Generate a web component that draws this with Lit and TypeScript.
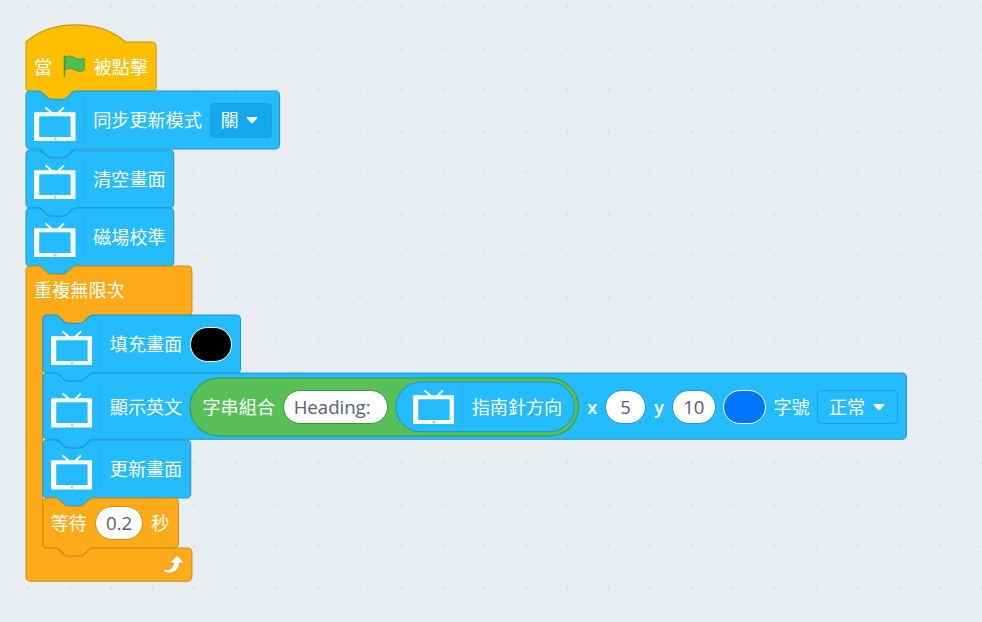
import { LitElement, html, svg, css, TemplateResult } from "lit";
import { customElement, property } from "lit/decorators.js";

const S = 1.0368;

type Shape = "hat" | "stack" | "loop" | "round";

const NOTCH = "c2,0 3,1 4,2 l4,4 c1,1 2,2 4,2 h12 c2,0 3,-1 4,-2 l4,-4 c1,-1 2,-2 4,-2";
const TAB = "c-2,0 -3,1 -4,2 l-4,4 c-1,1 -2,2 -4,2 h-12 c-2,0 -3,-1 -4,-2 l-4,-4 c-1,-1 -2,-2 -4,-2";
const CORNER = "a4,4 0 0,1 4,4";

function outline(shape: Shape, w: number, h: number, inner: number): string {
  const bottom = `V${h - 4} a4,4 0 0,1 -4,4`;
  switch (shape) {
    case "hat":
      return `M0,0 c25,-22 71,-22 96,0 H${w - 4} ${CORNER} ${bottom} H48 ${TAB} H4 a4,4 0 0,1 -4,-4 Z`;
    case "stack":
      return `M0,4 A4,4 0 0,1 4,0 H12 ${NOTCH} H${w - 4} ${CORNER} ${bottom} H48 ${TAB} H4 a4,4 0 0,1 -4,-4 Z`;
    case "loop":
      return (
        `M0,4 A4,4 0 0,1 4,0 H12 ${NOTCH} H${w - 4} ${CORNER} V44 a4,4 0 0,1 -4,4 ` +
        `H64 ${TAB} H20 a4,4 0 0,0 -4,4 V${44 + inner} a4,4 0 0,0 4,4 H28 ${NOTCH} ` +
        `H${w - 4} ${CORNER} ${bottom} H4 a4,4 0 0,1 -4,-4 Z`
      );
    case "round": {
      const r = h / 2;
      return `M${r},0 H${w - r} a${r},${r} 0 0,1 0,${h} H${r} a${r},${r} 0 0,1 0,${-h} Z`;
    }
  }
}

@customElement("code-block")
class CodeBlock extends LitElement {
  @property() shape: Shape = "stack";
  @property() tone = "screen";
  @property({ type: Number }) w = 100;
  @property({ type: Number }) h = 56;
  @property({ type: Number }) inner = 0;

  static styles = css`
    :host { display: block; position: relative; flex: none; }
    .shape { position: absolute; left: 0; top: 0; width: 100%; height: 100%; overflow: visible; }
    .screen { fill: #24bcff; stroke: #1c96cc; }
    .event { fill: #ffbf00; stroke: #cc9900; }
    .control { fill: #ffab19; stroke: #cf8b17; }
    .operator { fill: #59c059; stroke: #389438; }
    .body { position: relative; height: 100%; }
  `;

  render() {
    this.style.width = `${this.w * S}px`;
    this.style.height = `${this.h * S}px`;
    return html`
      <svg class="shape ${this.tone}">
        <path transform="scale(${S})" d=${outline(this.shape, this.w, this.h, this.inner)} />
      </svg>
      <div class="body"><slot></slot></div>
    `;
  }
}

@customElement("app-root")
class AppRoot extends LitElement {
  static styles = css`
    :host {
      display: block;
      width: 982px;
      height: 622px;
      overflow: hidden;
      position: relative;
      background: #e8edf1;
      font-family: "Open Sans", "Noto Sans CJK TC", sans-serif;
      font-size: 18.1px;
      line-height: 24px;
      color: #fff;
      white-space: nowrap;
    }
    .grid { position: absolute; inset: 0; width: 100%; height: 100%; }
    .script { position: absolute; left: 26px; top: 41.7px; display: flex; flex-direction: column; }
    .row { display: flex; align-items: center; height: 100%; padding-left: 8.1px; gap: 8.3px; box-sizing: border-box; }
    .row.joined { padding-left: 12px; }
    .row.sensor { padding-left: 16.5px; }
    .row.sensor .tv { margin-top: -3px; }
    .row.header { height: 49.8px; }
    .nested { display: flex; flex-direction: column; padding-left: 16.6px; }
    .footer { display: flex; align-items: center; justify-content: flex-end; height: 33.2px; padding-right: 8.3px; }
    .device { display: flex; flex: none; width: 50.8px; height: 42px; box-sizing: border-box; border-right: 1px solid #1fb0f2; }
    .tv { width: 41.5px; height: 41.5px; flex: none; margin-top: .4px; }
    .flag, .repeat { width: 24.9px; height: 24.9px; flex: none; }
    .flag { margin: 0 -1px 0 1px; }
    .label { flex: none; }
    .latin { font-weight: 600; }
    .field {
      flex: none; height: 34.2px; box-sizing: border-box; border: 1px solid #1c96cc; border-radius: 18px;
      background: #fff; color: #575e75; display: flex; align-items: center; justify-content: center;
      margin: 0 -0.5px; font-size: 18.6px;
    }
    .field.on-operator { border-color: #389438; justify-content: flex-start; padding-left: 10px; }
    .field.on-control { border-color: #cf8b17; }
    .field.swatch { border-color: #fff; }
    .black { background: #000; }
    .blue { background: #0076ff; }
    .menu {
      flex: none; height: 34.2px; box-sizing: border-box; border: 1px solid #1c9fdb; border-radius: 4.5px;
      display: flex; align-items: center; gap: 7.7px; padding-left: 10.5px; margin: 0 -0.5px;
    }
    .menu.filled { background: #14a9ee; gap: 7px; padding-left: 10px; }
    .caret { width: 12px; height: 8px; }
    .w-heading { width: 105.7px; }
    .w-five { width: 41.5px; }
    .w-ten { width: 44.2px; }
    .w-swatch { width: 42.5px; }
    .w-delay { width: 48.8px; }
    .w-sync { width: 62.5px; }
    .w-size { width: 81px; }
  `;

  private device(): TemplateResult {
    return html`<div class="device">
      <svg class="tv" viewBox="0 0 41.5 41.5">
        <path d="M11.4 7.4 L18 13 M30 7.4 L24.2 13" fill="none" stroke="#fff" stroke-width="1.9" />
        <path fill="#fff" fill-rule="evenodd"
          d="M1 12.2 H40.5 Q41.5 12.2 41.5 13.2 V40.5 Q41.5 41.5 40.5 41.5 H1 Q0 41.5 0 40.5 V13.2 Q0 12.2 1 12.2 Z M6 16.2 Q5.2 16.2 5.2 17 V37 H36.6 V17 Q36.6 16.2 35.8 16.2 Z" />
        <circle cx="21.2" cy="39.2" r="1" fill="none" stroke="#24bcff" stroke-width=".7" />
      </svg>
    </div>`;
  }

  private caret(): TemplateResult {
    return html`<svg class="caret" viewBox="0 0 12 8">
      <path fill="#fff" d="M1.6 .9 H10.4 Q12 1.2 11 2.5 L7 6.7 Q6 7.6 5 6.7 L1 2.5 Q0 1.2 1.6 .9 Z" />
    </svg>`;
  }

  private deviceRow(text: string, extra: unknown = ""): TemplateResult {
    return html`<div class="row">${this.device()}<span class="label">${text}</span>${extra}</div>`;
  }

  render() {
    return html`
      <svg class="grid">
        <defs>
          <pattern id="dots" width="41.47" height="41.47" patternUnits="userSpaceOnUse" x="7.3" y="-14">
            ${svg`<path d="M19.4 20.9 H22.4 M20.9 19.4 V22.4" stroke="#d9dcdf" stroke-width="1" />`}
          </pattern>
        </defs>
        <rect width="100%" height="100%" fill="url(#dots)" />
      </svg>

      <div class="script">
        <code-block shape="hat" tone="event" w="125.5" h="48">
          <div class="row">
            <span class="label">當</span>
            <svg class="flag" viewBox="0 0 24 24">
              <path fill="#4cbf56" stroke="#45993d" stroke-width=".9" stroke-linejoin="round"
                d="M2.8 3 C6 1.4 9.4 1.8 12 3.6 C14.8 5.4 17.6 5.6 21.4 4.2 V15.4 C17.6 17.6 14.6 16.8 12 15.2 C9.2 13.4 6.2 13.6 2.8 15.2 Z" />
              <path d="M2.4 2.2 V21.6" fill="none" stroke="#45993d" stroke-width="1.4" stroke-linecap="round" />
            </svg>
            <span class="label">被點擊</span>
          </div>
        </code-block>

        <code-block w="244.5">
          ${this.deviceRow("同步更新模式", html`<div class="menu filled w-sync"><span>關</span>${this.caret()}</div>`)}
        </code-block>
        <code-block w="142.5">${this.deviceRow("清空畫面")}</code-block>
        <code-block w="142.5">${this.deviceRow("磁場校準")}</code-block>

        <code-block shape="loop" tone="control" w="160" h="304" inner="224">
          <div class="row header"><span class="label">重複無限次</span></div>
          <div class="nested">
            <code-block w="190.5">
              ${this.deviceRow("填充畫面", html`<div class="field swatch black w-swatch"></div>`)}
            </code-block>
            <code-block w="832.7" h="64">
              ${this.deviceRow(
                "顯示英文",
                html`
                  <code-block shape="round" tone="operator" w="374.6" h="56">
                    <div class="row joined">
                      <span class="label">字串組合</span>
                      <div class="field on-operator w-heading">Heading: </div>
                      <code-block shape="round" w="172" h="48">
                        <div class="row sensor">${this.device()}<span class="label">指南針方向</span></div>
                      </code-block>
                    </div>
                  </code-block>
                  <span class="label latin">x</span>
                  <div class="field w-five">5</div>
                  <span class="label latin">y</span>
                  <div class="field w-ten">10</div>
                  <div class="field swatch blue w-swatch"></div>
                  <span class="label">字號</span>
                  <div class="menu w-size"><span>正常</span>${this.caret()}</div>
                `
              )}
            </code-block>
            <code-block w="142.5">${this.deviceRow("更新畫面")}</code-block>
            <code-block tone="control" w="130.7" h="48">
              <div class="row">
                <span class="label">等待</span>
                <div class="field on-control w-delay">0.2</div>
                <span class="label">秒</span>
              </div>
            </code-block>
          </div>
          <div class="footer">
            <svg class="repeat" viewBox="0 0 24 24">
              <path fill="#fff" stroke="#cf8b17" stroke-width=".5" stroke-linejoin="round"
                d="M4.6 16.6 C5.6 15.8 6.6 17.4 9 16.9 C12.4 16.2 14 13.6 14 10.6 H11.8 Q10.8 10.2 11.6 9.2 L16.6 4 Q17.4 3.4 18.2 4 L23.2 9.2 Q23.8 10.4 22.6 10.6 H19.6 C19.6 16 15.6 20 10.6 20.2 C7.4 20.2 4 18.8 4.6 16.6 Z" />
            </svg>
          </div>
        </code-block>
      </div>
    `;
  }
}
